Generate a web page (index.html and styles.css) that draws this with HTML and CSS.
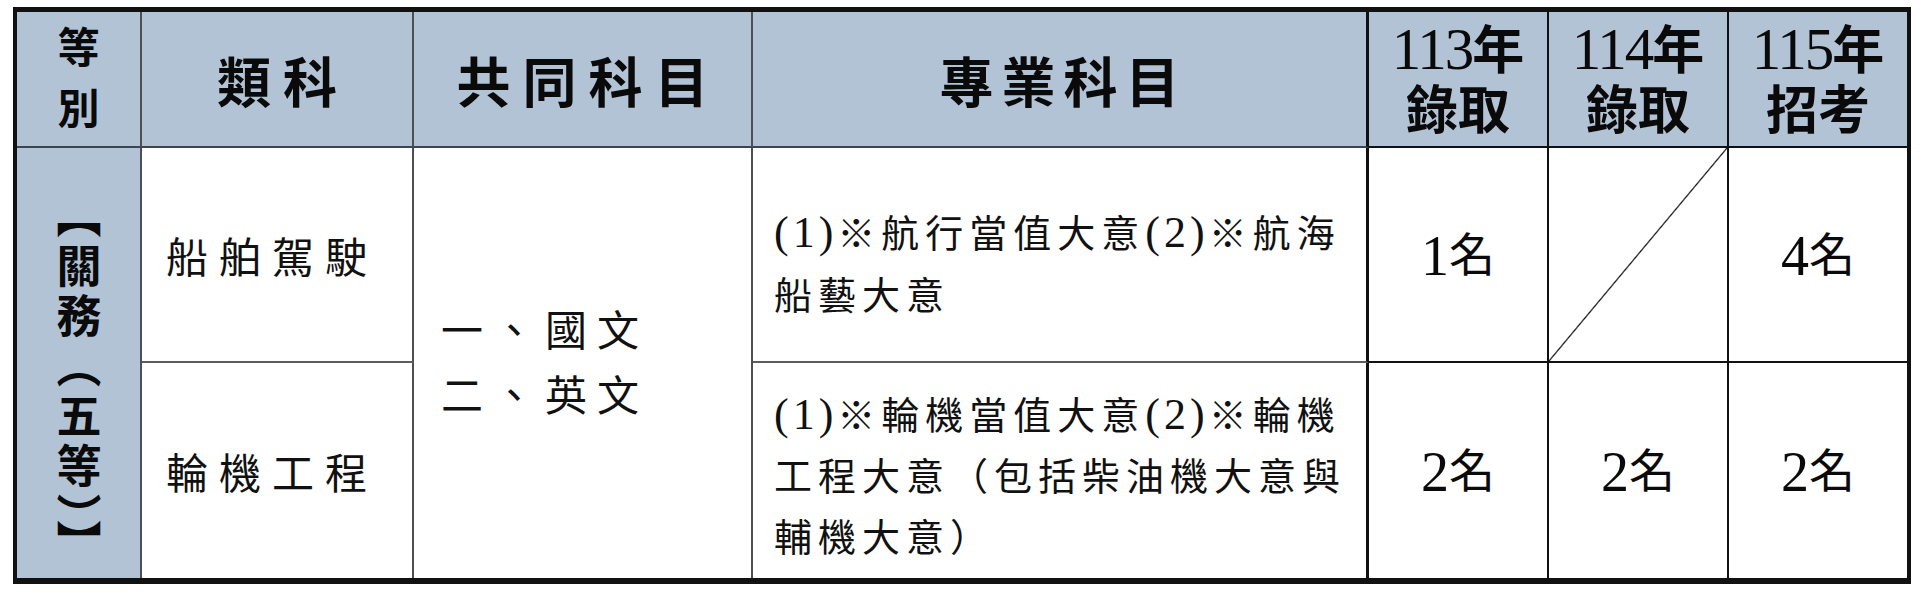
FILE: index.html
```html
<!DOCTYPE html>
<html lang="zh-Hant">
<head>
<meta charset="utf-8">
<title>關務五等 招考名額</title>
<link rel="stylesheet" href="styles.css">
</head>
<body>
<div class="sheet">
  <div class="cell head c-grade"><span>等</span><span>別</span></div>
  <div class="cell head c-cat sp-cat">類科</div>
  <div class="cell head c-common sp-common">共同科目</div>
  <div class="cell head c-major sp-major">專業科目</div>
  <div class="cell head c-year"><span><span class="num">113</span>年</span><span>錄取</span></div>
  <div class="cell head c-year"><span><span class="num">114</span>年</span><span>錄取</span></div>
  <div class="cell head c-year last-col"><span><span class="num">115</span>年</span><span>招考</span></div>

  <div class="cell grade-body last-row"><span class="vert">【關務（五等）】</span></div>
  <div class="cell body c-cat cat-text">船舶駕駛</div>
  <div class="cell body c-common common-text last-row"><span>一、國文</span><span>二、英文</span></div>
  <div class="cell body c-major major-text r1"><span class="paren">(1)</span>※航行當值大意<span class="paren">(2)</span>※航海<br>船藝大意</div>
  <div class="cell body c-year count"><span class="num">1</span>名</div>
  <div class="cell body c-year diag"></div>
  <div class="cell body c-year count last-col"><span class="num">4</span>名</div>

  <div class="cell body c-cat cat-text last-row">輪機工程</div>
  <div class="cell body c-major major-text r2 last-row"><span class="paren">(1)</span>※輪機當值大意<span class="paren">(2)</span>※輪機<br>工程大意（包括柴油機大意與<br>輔機大意）</div>
  <div class="cell body c-year count last-row"><span class="num">2</span>名</div>
  <div class="cell body c-year count last-row"><span class="num">2</span>名</div>
  <div class="cell body c-year count last-row last-col"><span class="num">2</span>名</div>
</div>
</body>
</html>
```

FILE: styles.css
```css
* { box-sizing: border-box; }

html, body {
  margin: 0;
  padding: 0;
  background: #ffffff;
}

body {
  padding: 7px 0 0 13px;
  font-family: "Liberation Serif", "Noto Sans CJK TC", serif;
  color: #111;
}

.sheet {
  display: grid;
  width: 1898px;
  grid-template-columns: 125px 272px 339px 616px 180px 180px 178px;
  grid-template-rows: 136px 215px 215px;
  border-style: solid;
  border-color: #111;
  border-width: 5px 4px 6px 4px;
}

.cell {
  display: flex;
  align-items: center;
  justify-content: center;
  border-right: 2px solid #4d4f52;
  border-bottom: 2px solid #5a5c5f;
}

.cell.last-col { border-right: none; }
.cell.last-row { border-bottom: none; }

.head {
  background: #b2c3d6;
  color: #0a0a0a;
  font-weight: 700;
  border-bottom: 2px solid #3c4550;
}

.c-grade {
  flex-direction: column;
  font-size: 42px;
  line-height: 61px;
  padding-top: 2px;
}

.sp-cat { font-size: 54px; letter-spacing: 12px; padding-left: 12px; }
.sp-common { font-size: 54px; letter-spacing: 12px; padding-left: 12px; }
.sp-major { font-size: 54px; letter-spacing: 8px; padding-left: 8px; }

.c-major { border-right: 3px solid #111; }

.c-year {
  flex-direction: column;
  font-size: 52px;
  line-height: 60px;
  border-right-color: #111;
  border-bottom-color: #111;
  padding-top: 2px;
}

.head.c-year { border-bottom: 2px solid #111; }

.c-year .num {
  font-size: 59px;
  letter-spacing: -2px;
  font-weight: 400;
}

.grade-body {
  grid-row: 2 / span 2;
  grid-column: 1;
  background: #b2c3d6;
  font-weight: 700;
  font-size: 45px;
  color: #0a0a0a;
}

.vert {
  writing-mode: vertical-rl;
  text-orientation: mixed;
  font-family: "Noto Sans CJK TC", sans-serif;
  line-height: 50px;
  letter-spacing: 5px;
  margin-top: 38px;
}

.body { background: #ffffff; }

.cat-text {
  justify-content: flex-start;
  padding-left: 24px;
  font-size: 42px;
  letter-spacing: 11px;
}

.common-text {
  grid-row: 2 / span 2;
  grid-column: 3;
  flex-direction: column;
  align-items: flex-start;
  justify-content: center;
  padding-left: 27px;
  font-size: 42px;
  line-height: 65px;
  letter-spacing: 10px;
  padding-top: 4px;
}

.major-text {
  display: block;
  align-self: stretch;
  padding-left: 21px;
  font-size: 38px;
  line-height: 62px;
  letter-spacing: 6px;
  white-space: nowrap;
}

.major-text .paren {
  font-size: 44px;
  letter-spacing: 4px;
}

.major-text.r1 { padding-top: 54px; }
.major-text.r2 { padding-top: 21px; line-height: 61px; }

.count {
  font-size: 46px;
  color: #0a0a0a;
  flex-direction: row;
  padding-top: 2px;
}

.count .num {
  font-size: 56px;
  letter-spacing: 0;
}

.diag {
  background: linear-gradient(to bottom right,
    transparent calc(50% - 1.2px),
    #111 50%,
    transparent calc(50% + 1.2px));
}
```
